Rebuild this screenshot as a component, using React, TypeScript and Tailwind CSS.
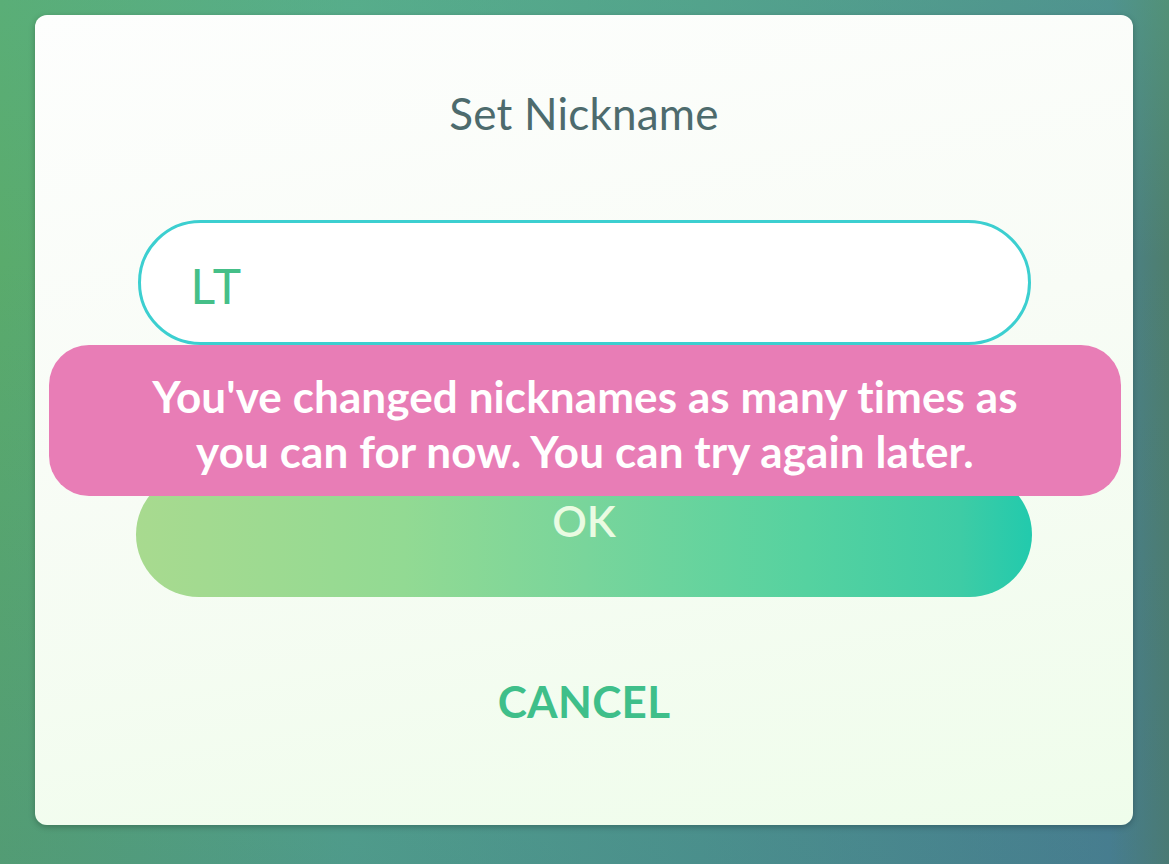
import React from "react";

export default function App() {
  return (
    <div
      className="w-[1169px] h-[864px] overflow-hidden relative"
      style={{ fontFamily: "Lato, 'Open Sans', sans-serif" }}
    >
      <div className="absolute inset-0 bg-[linear-gradient(90deg,#5aab6c_0%,#55a98a_30%,#4f9a8c_60%,#4a8290_95%,#4e7e6c_100%)]" />
      <div className="absolute inset-0 bg-[linear-gradient(180deg,rgba(90,180,140,0.35)_0%,rgba(0,0,0,0)_30%,rgba(60,110,140,0.25)_100%)]" />
      <div className="relative pt-[15px] pl-[35px]">
        <div className="relative w-[1098px] h-[810px] rounded-[12px] bg-[linear-gradient(170deg,#fdfefd_0%,#f8fcf6_45%,#effdeb_100%)] shadow-[0_2px_6px_rgba(0,0,0,0.25)] flex flex-col items-center">
          <div className="pt-[72px] text-[44px] leading-[52px] text-[#4d6b6d] tracking-[0.2px]">
            Set Nickname
          </div>
          <div className="mt-[81px] w-[893px] h-[125px] rounded-full border-[3px] border-[#3ccfd0] bg-white flex items-center pl-[50px]">
            <span className="text-[48px] leading-none text-[#45bf88] tracking-[2px] mt-[6px]">LT</span>
          </div>
          <div className="mt-[127px] w-[896px] h-[125px] rounded-full bg-[linear-gradient(90deg,#a8da8f_0%,#92da93_30%,#79d59b_50%,#55d2a0_75%,#3ecca5_92%,#22caad_100%)] flex items-start justify-center pt-[24px]">
            <span className="text-[43px] leading-[50px] text-[#eafbe2] font-semibold">OK</span>
          </div>
          <div className="mt-[78px] text-[44px] leading-[52px] font-bold text-[#3fbf8a] tracking-[0.3px]">
            CANCEL
          </div>
          <div className="absolute left-[14px] top-[330px] w-[1072px] h-[151px] rounded-[40px] bg-[#e87db6] flex flex-col items-center justify-center pt-[6px]">
            <div className="text-[44px] leading-[55px] text-white text-center font-bold tracking-[0.1px] [font-variant-ligatures:none]">
              You've changed nicknames as many times as
              <br />
              you can for now. You can try again later.
            </div>
          </div>
        </div>
      </div>
    </div>
  );
}
